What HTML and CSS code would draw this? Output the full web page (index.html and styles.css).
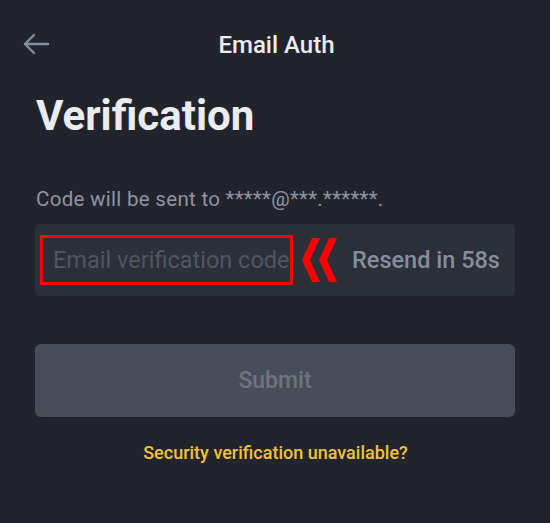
FILE: index.html
```html
<!DOCTYPE html>
<html>
<head>
<meta charset="utf-8">
<link rel="stylesheet" href="styles.css">
</head>
<body>
<div class="page">
  <header class="topbar">
    <svg class="back" width="28" height="24" viewBox="0 0 28 24"><path d="M26 12H3M12 3L3 12l9 9" fill="none" stroke="#848e9c" stroke-width="2.4" stroke-linecap="round" stroke-linejoin="round"/></svg>
    <div class="title">Email Auth</div>
  </header>
  <h1 class="heading">Verification</h1>
  <p class="hint">Code will be sent to *****@***.******.</p>
  <div class="field">
    <div class="marked">
      <input class="code" type="text" placeholder="Email verification code">
    </div>
    <svg class="chevrons" width="36" height="44" viewBox="0 0 36 44"><path d="M10 0h8L8 22l10 22h-8L0 22z M27 0h8L25 22l10 22h-8L17 22z" fill="#ff0000"/></svg>
    <span class="resend">Resend in 58s</span>
  </div>
  <button class="submit">Submit</button>
  <a class="link">Security verification unavailable?</a>
</div>
</body>
</html>
```
FILE: styles.css
```css
html, body {
  margin: 0;
  padding: 0;
  background: #21242c;
}
body {
  font-family: Roboto, "Noto Sans", sans-serif;
  width: 550px;
  height: 523px;
  overflow: hidden;
}
.page {
  padding: 0 35px 0 36px;
}
.topbar {
  position: relative;
  height: 90px;
  display: flex;
  align-items: center;
  justify-content: center;
}
.back {
  position: absolute;
  left: -14px;
  top: 32px;
}
.title {
  color: #eaecef;
  font-size: 24px;
  font-weight: 500;
  margin-left: 2px;
}
.heading {
  margin: 0;
  color: #eaecef;
  font-size: 42px;
  font-weight: 700;
  line-height: 52px;
}
.hint {
  margin: 44px 0 0;
  color: #8f96a3;
  font-size: 20.5px;
  letter-spacing: 0.3px;
  line-height: 26px;
}
.field {
  margin: 12px 0 0 -1px;
  height: 72px;
  background: #2b2f38;
  border-radius: 4px;
  display: flex;
  align-items: center;
  padding-left: 5px;
  box-sizing: border-box;
}
.marked {
  width: 253px;
  height: 50px;
  border: 3px solid #ff0000;
  box-sizing: border-box;
  display: flex;
  align-items: center;
}
.code {
  background: transparent;
  border: 0;
  outline: none;
  width: 100%;
  padding: 0 0 0 10px;
  font-family: inherit;
  font-size: 23.5px;
  color: #eaecef;
}
.code::placeholder {
  color: #4f5663;
}
.chevrons {
  margin-left: 9px;
}
.resend {
  margin-left: 14px;
  color: #848e9c;
  font-size: 23.5px;
  font-weight: 500;
}
.submit {
  display: block;
  margin: 48px 0 0 -1px;
  width: 480px;
  height: 73px;
  border: 0;
  border-radius: 6px;
  background: #474d59;
  color: #6e7581;
  font-family: inherit;
  font-size: 23px;
  font-weight: 500;
}
.link {
  display: block;
  text-align: center;
  margin-top: 25px;
  color: #f0c23a;
  font-size: 18px;
  font-weight: 500;
}
```
